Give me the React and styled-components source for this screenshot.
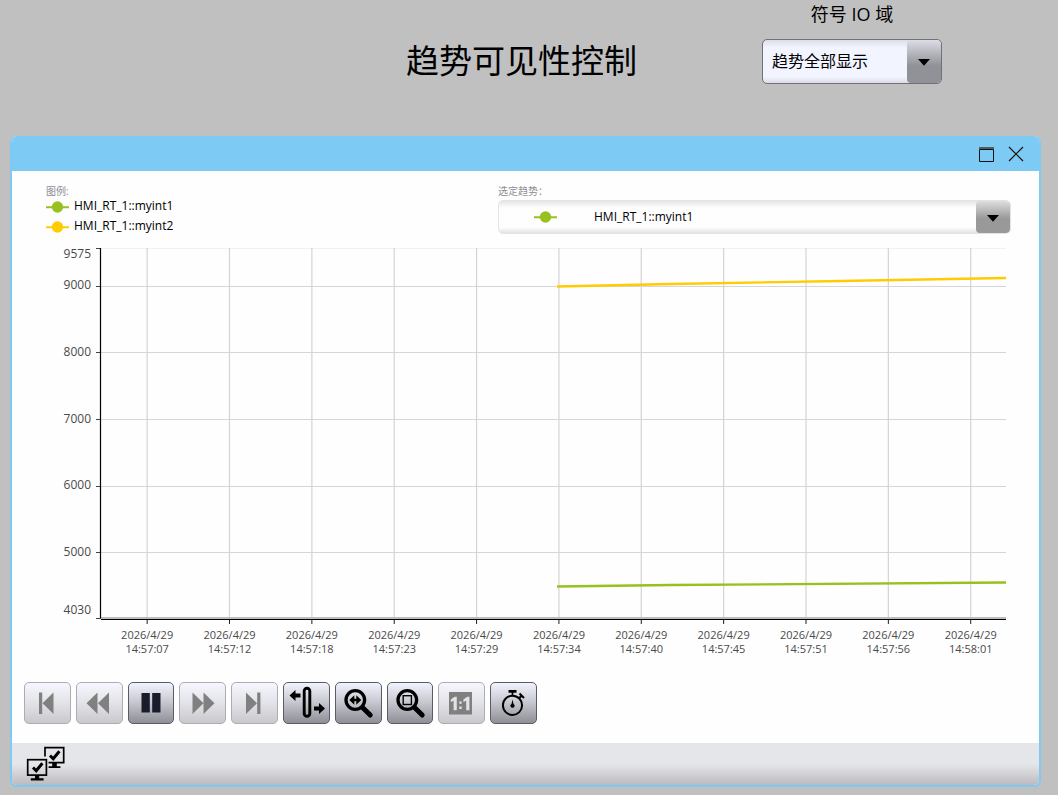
import React, { useState } from 'react';
import styled, { createGlobalStyle } from 'styled-components';

const GlobalStyle = createGlobalStyle`
  * {
    box-sizing: border-box;
  }

  body {
    margin: 0;
    background-color: #c0c0c0;
    font-family: "Open Sans", "Noto Sans CJK SC", sans-serif;
    color: #000;
  }
`;

const Screen = styled.div`
  padding: 0 17px 8px 10px;
`;

const Header = styled.header`
  display: grid;
  grid-template-columns: 1fr auto 1fr;
  height: 136px;
  padding-right: 8px;
`;

const Title = styled.h1`
  grid-column: 2;
  margin: 37px 0 0;
  font-size: 33px;
  line-height: 48px;
  font-weight: 400;
`;

const Field = styled.div`
  width: 180px;
  margin-left: 125px;
`;

const FieldLabel = styled.label`
  display: block;
  margin-bottom: 11px;
  font-size: 18px;
  line-height: 28px;
  text-align: center;
`;

const SelectBox = styled.div`
  display: grid;
  grid-template-columns: 1fr 34px;
  height: ${({ $height }) => $height};
  border: 1px solid ${({ $border }) => $border};
  border-radius: 5px;
  overflow: hidden;
  background: ${({ $background }) => $background};
`;

const Select = styled.select`
  grid-area: 1 / 1 / 2 / 3;
  width: 100%;
  height: 100%;
  padding: 0 40px 2px ${({ $indent }) => $indent};
  border: none;
  outline: none;
  appearance: none;
  background: transparent;
  color: #000;
  font-family: inherit;
  font-size: ${({ $size }) => $size};
`;

const SelectArrow = styled.span`
  grid-area: 1 / 2 / 2 / 3;
  display: flex;
  align-items: center;
  justify-content: center;
  padding-top: 2px;
  border-radius: 4px;
  background: ${({ $background }) => $background};
  pointer-events: none;
`;

const SelectMarker = styled.span`
  grid-area: 1 / 1 / 2 / 2;
  display: flex;
  align-items: center;
  padding-left: 35px;
  pointer-events: none;
`;

const Window = styled.section`
  border: 2px solid #7dcbf5;
  border-top: none;
  border-radius: 7px;
  overflow: hidden;
  background-color: #fefefe;
`;

const TitleBar = styled.div`
  display: flex;
  justify-content: flex-end;
  align-items: center;
  gap: 12px;
  height: 35px;
  padding: 1px 14px 0 0;
  background-color: #7dcbf5;
`;

const WindowButton = styled.button`
  display: flex;
  padding: 0;
  border: none;
  background: none;
  cursor: pointer;
`;

const TopRow = styled.div`
  display: grid;
  grid-template-columns: 1fr 513px;
  padding: 14px 28px 0 34px;
`;

const Caption = styled.div`
  color: #8e8e94;
  font-size: 10px;
  line-height: 12px;
`;

const CaptionLabel = styled(Caption).attrs({ as: 'label' })`
  display: block;
  margin-bottom: 3px;
`;

const LegendList = styled.ul`
  margin: 0;
  padding: 0;
  list-style: none;
`;

const LegendItem = styled.li`
  display: flex;
  align-items: center;
  gap: 5px;
  height: 20px;
  font-size: 12px;
  line-height: 18px;

  span {
    padding-bottom: 2px;
  }
`;

const Chart = styled.div`
  display: flex;
  margin-top: 11px;
  padding: 0 33px 0 34px;
`;

const YAxis = styled.svg`
  flex: none;
  width: 55px;
  height: 416px;
  overflow: visible;
`;

const Plot = styled.svg`
  flex: 1;
  min-width: 0;
  height: 416px;
  overflow: visible;
`;

const YLabel = styled.text`
  fill: #4a4a4a;
  font-size: 12px;
  text-anchor: end;
`;

const XLabel = styled.text`
  fill: #4a4a4a;
  font-size: 11px;
  text-anchor: middle;
`;

const Toolbar = styled.div`
  display: grid;
  grid-template-columns: repeat(10, minmax(0, 1fr));
  gap: 5px;
  width: 513px;
  margin: 18px 0 19px 12px;
`;

const ToolButton = styled.button`
  display: flex;
  align-items: center;
  justify-content: center;
  height: 42px;
  padding: 0;
  border: 1px solid #5a5b66;
  border-radius: 5px;
  background: linear-gradient(#f1f3fd 0%, #c9cad2 45%, #8f9096 100%);
  color: #000;
  cursor: pointer;

  svg {
    flex: none;
  }

  &:disabled {
    border-color: #acacb2;
    background: linear-gradient(#f6f7fe 0%, #e2e2e8 50%, #c9c9cd 100%);
    color: #808080;
    cursor: default;
  }
`;

const StatusBar = styled.footer`
  display: flex;
  align-items: center;
  height: 42px;
  padding-left: 14px;
  background: linear-gradient(#e5e6ea 0%, #e5e6ea 50%, #bbbac0 100%);
`;

const SERIES = [
  { name: 'HMI_RT_1::myint1', color: '#96c11f', points: '456,338.5 570,337 905,334.5' },
  { name: 'HMI_RT_1::myint2', color: '#ffcc00', points: '456,38.5 570,36 740,33 905,30' },
];

const Y_TICKS = [
  { value: 9575, y: 0, label: 10 },
  { value: 9000, y: 38, label: 41 },
  { value: 8000, y: 104, label: 108 },
  { value: 7000, y: 171, label: 175 },
  { value: 6000, y: 238, label: 241 },
  { value: 5000, y: 304, label: 308 },
  { value: 4030, y: 370, label: 366 },
];

const TIMES = [
  '14:57:07', '14:57:12', '14:57:18', '14:57:23', '14:57:29', '14:57:34',
  '14:57:40', '14:57:45', '14:57:51', '14:57:56', '14:58:01',
];

const tickX = (i) => `${5.1 + i * 9.1}%`;

function Marker({ color }) {
  return (
    <svg width="23" height="12" viewBox="0 0 23 12">
      <path d="M0 6.2H23" stroke={color} strokeWidth="2" />
      <circle cx="11.5" cy="6" r="5.7" fill={color} />
    </svg>
  );
}

function ArrowIcon() {
  return (
    <svg width="12" height="7" viewBox="0 0 12 7">
      <path d="M0 0H12L6 6.8Z" />
    </svg>
  );
}

const ICONS = {
  first: (
    <path d="M15 10.5h3.2v21.5H15zM29.5 10.5v21.5L18.5 21.2z" fill="currentColor" />
  ),
  rewind: (
    <path d="M21.5 10.5v21.5L10.5 21.2zM33 10.5v21.5L22 21.2z" fill="currentColor" />
  ),
  pause: <path d="M13.5 11h8.3v19.5h-8.3zM24.2 11h8.3v19.5h-8.3z" fill="#1b1c2b" />,
  forward: (
    <path d="M13.5 10.5v21.5L24.5 21.2zM24.5 10.5v21.5L35.5 21.2z" fill="currentColor" />
  ),
  last: (
    <path d="M15 10.5v21.5L26 21.2zM26.2 10.5h3.2v21.5h-3.2z" fill="currentColor" />
  ),
  ruler: (
    <>
      <rect x="21.2" y="6.2" width="5.6" height="28" rx="2.8" fill="none" stroke="currentColor" strokeWidth="2.9" />
      <path d="M6.5 13.5L12.5 8v3.5h5v4h-5v3.5zM42 26.5L36 21v3.5h-5v4h5v3.5z" fill="currentColor" />
    </>
  ),
  zoomTime: (
    <>
      <circle cx="20.3" cy="18" r="9.3" fill="none" stroke="currentColor" strokeWidth="3.3" />
      <path d="M27.5 25.5L35.2 33" stroke="currentColor" strokeWidth="5" strokeLinecap="round" />
      <path d="M14.3 18l5-4.8v3.5h2v-3.5l5 4.8-5 4.8v-3.5h-2v3.5z" fill="currentColor" />
    </>
  ),
  zoomArea: (
    <>
      <circle cx="20.3" cy="18" r="9.3" fill="none" stroke="currentColor" strokeWidth="3.3" />
      <path d="M27.5 25.5L35.2 33" stroke="currentColor" strokeWidth="5" strokeLinecap="round" />
      <rect x="16.2" y="13.7" width="8.2" height="8.8" fill="none" stroke="currentColor" strokeWidth="1.4" />
    </>
  ),
  original: (
    <>
      <rect x="11" y="10" width="23" height="22.5" fill="currentColor" />
      <path
        d="M15.6 28.2V18.8l-2.8 1.2v-2.6l3.8-2.6h2.2v13.4zM28.2 28.2V18.8l-2.8 1.2v-2.6l3.8-2.6h2.2v13.4zM21.3 19.4h2.4v2.4h-2.4zM21.3 24.6h2.4V27h-2.4z"
        fill="#e2e2e7"
      />
    </>
  ),
  stopwatch: (
    <>
      <circle cx="22.5" cy="23.3" r="9.6" fill="none" stroke="currentColor" strokeWidth="2" />
      <path d="M18.5 8h8v2.8h-8zM21.6 10h1.8v4h-1.8z" fill="currentColor" />
      <path d="M28.8 16.5l3-3M29.5 11.5l4.5 4.5" stroke="currentColor" strokeWidth="2" />
      <path d="M22.5 17.5l1 4.4a2 2 0 1 1-2 0z" fill="currentColor" />
    </>
  ),
};

const TOOLS = [
  { icon: 'first', label: '首页', disabled: true },
  { icon: 'rewind', label: '后退', disabled: true },
  { icon: 'pause', label: '暂停' },
  { icon: 'forward', label: '前进', disabled: true },
  { icon: 'last', label: '末页', disabled: true },
  { icon: 'ruler', label: '标尺' },
  { icon: 'zoomTime', label: '缩放时间轴' },
  { icon: 'zoomArea', label: '缩放区域' },
  { icon: 'original', label: '原始视图', disabled: true },
  { icon: 'stopwatch', label: '时间范围' },
];

function ConnectionIcon() {
  return (
    <svg width="40" height="36" viewBox="0 0 40 36">
      <path d="M19 10.5V1.7h18.7v15H22.5" fill="none" stroke="#000" strokeWidth="1.7" />
      <path d="M26.2 17h4.6v3.2h3.6v1.9H22.6v-1.9h3.6z" />
      <path d="M24 9.5l3.2 3.2 6.2-7.4" fill="none" stroke="#000" strokeWidth="3" />
      <rect x="1.7" y="13.7" width="18.7" height="15.4" fill="none" stroke="#000" strokeWidth="1.7" />
      <path d="M9 29h4.2v3.2h4.4v2.2H4.8v-2.2H9z" />
      <path d="M7 21.5l3.2 3.2 6.2-7.4" fill="none" stroke="#000" strokeWidth="3" />
    </svg>
  );
}

function TrendChart() {
  return (
    <Chart>
      <YAxis>
        {Y_TICKS.map((tick) => (
          <g key={tick.value}>
            <YLabel x="45" y={tick.label}>{tick.value}</YLabel>
            <path d={`M50 ${tick.y + 0.5}H55`} stroke="#444" />
          </g>
        ))}
      </YAxis>
      <Plot>
        {Y_TICKS.map((tick) => (
          <line key={tick.value} x1="0" x2="100%" y1={tick.y + 0.5} y2={tick.y + 0.5} stroke={tick.y ? '#d6d6d6' : '#f1f1f1'} />
        ))}
        {TIMES.map((time, i) => (
          <g key={time}>
            <line x1={tickX(i)} x2={tickX(i)} y1="0" y2="370" stroke="#d4d4d4" strokeWidth="1.2" />
            <line x1={tickX(i)} x2={tickX(i)} y1="372" y2="376" stroke="#222" />
            <XLabel x={tickX(i)} y="391">2026/4/29</XLabel>
            <XLabel x={tickX(i)} y="405">{time}</XLabel>
          </g>
        ))}
        <line x1="0" x2="100%" y1="370" y2="370" stroke="#bdbdbd" strokeWidth="2" />
        <line x1="0" x2="100%" y1="371.5" y2="371.5" stroke="#000" />
        <line x1="-0.5" x2="-0.5" y1="0" y2="370" stroke="#000" strokeWidth="1.2" />
        <svg width="100%" height="372" viewBox="0 0 905 372" preserveAspectRatio="none">
          {SERIES.map((series) => (
            <polyline
              key={series.name}
              points={series.points}
              fill="none"
              stroke={series.color}
              strokeWidth="2.3"
              vectorEffect="non-scaling-stroke"
            />
          ))}
        </svg>
      </Plot>
    </Chart>
  );
}

function App() {
  const [selected, setSelected] = useState(0);

  return (
    <Screen>
      <GlobalStyle />
      <Header>
        <Title>趋势可见性控制</Title>
        <Field>
          <FieldLabel htmlFor="visibility">符号 IO 域</FieldLabel>
          <SelectBox
            $height="45px"
            $border="#6f7078"
            $background="linear-gradient(#dcdde6 0%, #f2f4ff 18%, #f2f4ff 85%, #dcdde6 100%)"
          >
            <Select id="visibility" $indent="9px" $size="16px">
              <option>趋势全部显示</option>
            </Select>
            <SelectArrow $background="linear-gradient(#dcdde4 0%, #919298 60%, #919298 100%)">
              <ArrowIcon />
            </SelectArrow>
          </SelectBox>
        </Field>
      </Header>

      <Window>
        <TitleBar>
          <WindowButton aria-label="最大化">
            <svg width="18" height="18" viewBox="0 0 18 18">
              <path d="M2 3H17" stroke="#4c5d68" strokeWidth="2" />
              <path d="M2.5 4.5H16.5V16.5H2.5Z" fill="none" stroke="#111" />
            </svg>
          </WindowButton>
          <WindowButton aria-label="关闭">
            <svg width="18" height="18" viewBox="0 0 18 18">
              <path d="M2 2L16 16M16 2L2 16" stroke="#111" strokeWidth="1.2" />
            </svg>
          </WindowButton>
        </TitleBar>

        <TopRow>
          <div>
            <Caption>图例:</Caption>
            <LegendList>
              {SERIES.map((series) => (
                <LegendItem key={series.name}>
                  <Marker color={series.color} />
                  <span>{series.name}</span>
                </LegendItem>
              ))}
            </LegendList>
          </div>
          <div>
            <CaptionLabel htmlFor="trend">选定趋势：</CaptionLabel>
            <SelectBox
              $height="34px"
              $border="#e3e3e3"
              $background="linear-gradient(#e6e6e6 0%, #fefefe 22%, #fefefe 82%, #e3e3e3 100%)"
            >
              <SelectMarker>
                <Marker color={SERIES[selected].color} />
              </SelectMarker>
              <Select
                id="trend"
                $indent="95px"
                $size="12px"
                value={selected}
                onChange={(e) => setSelected(Number(e.target.value))}
              >
                {SERIES.map((series, i) => (
                  <option key={series.name} value={i}>{series.name}</option>
                ))}
              </Select>
              <SelectArrow $background="linear-gradient(#dedede 0%, #999 55%, #999 100%)">
                <ArrowIcon />
              </SelectArrow>
            </SelectBox>
          </div>
        </TopRow>

        <TrendChart />

        <Toolbar>
          {TOOLS.map((tool) => (
            <ToolButton key={tool.icon} aria-label={tool.label} disabled={tool.disabled}>
              <svg width="45" height="40" viewBox="1 1 45 40">{ICONS[tool.icon]}</svg>
            </ToolButton>
          ))}
        </Toolbar>

        <StatusBar>
          <ConnectionIcon />
        </StatusBar>
      </Window>
    </Screen>
  );
}

export default App;
